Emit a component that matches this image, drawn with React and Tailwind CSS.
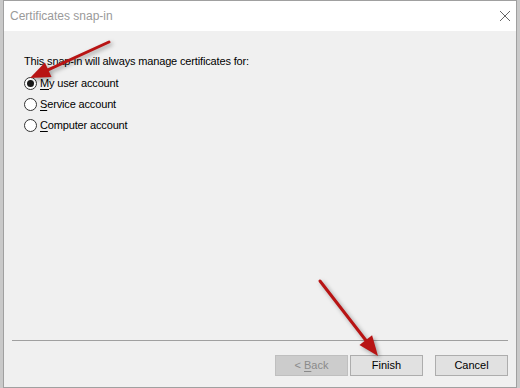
import React from "react";

const font = { fontFamily: '"Liberation Sans", Arial, sans-serif' };

function Radio({ checked, mnemonic, rest }) {
  return (
    <div className="flex items-center h-[21px]">
      <span className="w-[13px] h-[13px] rounded-full border border-[#333] bg-white flex items-center justify-center">
        {checked && <span className="w-[7px] h-[7px] rounded-full bg-[#1a1a1a]" />}
      </span>
      <span className="ml-[3px] text-[11px] tracking-[-0.15px] text-black">
        <span className="underline underline-offset-2">{mnemonic}</span>
        {rest}
      </span>
    </div>
  );
}

function Arrow({ x1, y1, x2, y2 }) {
  const dx = x2 - x1;
  const dy = y2 - y1;
  const len = Math.hypot(dx, dy);
  const ux = dx / len;
  const uy = dy / len;
  const hl = 20;
  const hw = 8;
  const bx = x2 - ux * hl;
  const by = y2 - uy * hl;
  const p1 = `${bx - uy * hw},${by + ux * hw}`;
  const p2 = `${bx + uy * hw},${by - ux * hw}`;
  return (
    <g>
      <line x1={x1} y1={y1} x2={bx + ux * 2} y2={by + uy * 2} stroke="#b81414" strokeWidth="3" strokeLinecap="round" />
      <polygon points={`${x2},${y2} ${p1} ${p2}`} fill="#b81414" />
    </g>
  );
}

export default function App() {
  return (
    <div className="w-[520px] h-[388px] bg-[#c9c9c9] relative overflow-hidden" style={font}>
      <div className="ml-[3px] w-[514px] h-[388px] border border-[#a0a0a0] flex flex-col bg-[#f0f0f0]">
        <div className="h-[30px] bg-white flex items-center justify-between pl-[6px] pr-[5px]">
          <span className="text-[12px] text-[#9a9a9a]">Certificates snap-in</span>
          <svg width="12" height="12" viewBox="0 0 12 12">
            <path d="M1 1 L11 11 M11 1 L1 11" stroke="#666" strokeWidth="1" />
          </svg>
        </div>
        <div className="flex-1 flex flex-col px-[20px] pt-[24px]">
          <p className="text-[11px] tracking-[-0.15px] text-black leading-[13px] mb-[5px]">This snap-in will always manage certificates for:</p>
          <Radio checked mnemonic="M" rest="y user account" />
          <Radio mnemonic="S" rest="ervice account" />
          <Radio mnemonic="C" rest="omputer account" />
        </div>
        <div className="mx-[8px] border-t border-[#a0a0a0]" />
        <div className="h-[46px] flex items-start justify-end pt-[14px] pr-[8px] gap-[2px] text-[11px]">
          <button className="w-[73px] h-[21px] bg-[#cccccc] border border-[#bfbfbf] text-[#8a8a8a]">
            &lt; <span className="underline underline-offset-2">B</span>ack
          </button>
          <button className="w-[73px] h-[21px] bg-[#e1e1e1] border border-[#adadad] text-black">Finish</button>
          <button className="ml-[10px] w-[73px] h-[21px] bg-[#e1e1e1] border border-[#adadad] text-black">Cancel</button>
        </div>
      </div>
      <svg className="absolute inset-0 pointer-events-none" width="520" height="388" style={{ filter: "drop-shadow(2px 2px 2px rgba(0,0,0,0.35))" }}>
        <Arrow x1={109} y1={42} x2={30} y2={78} />
        <Arrow x1={320} y1={281} x2={378} y2={356} />
      </svg>
    </div>
  );
}
